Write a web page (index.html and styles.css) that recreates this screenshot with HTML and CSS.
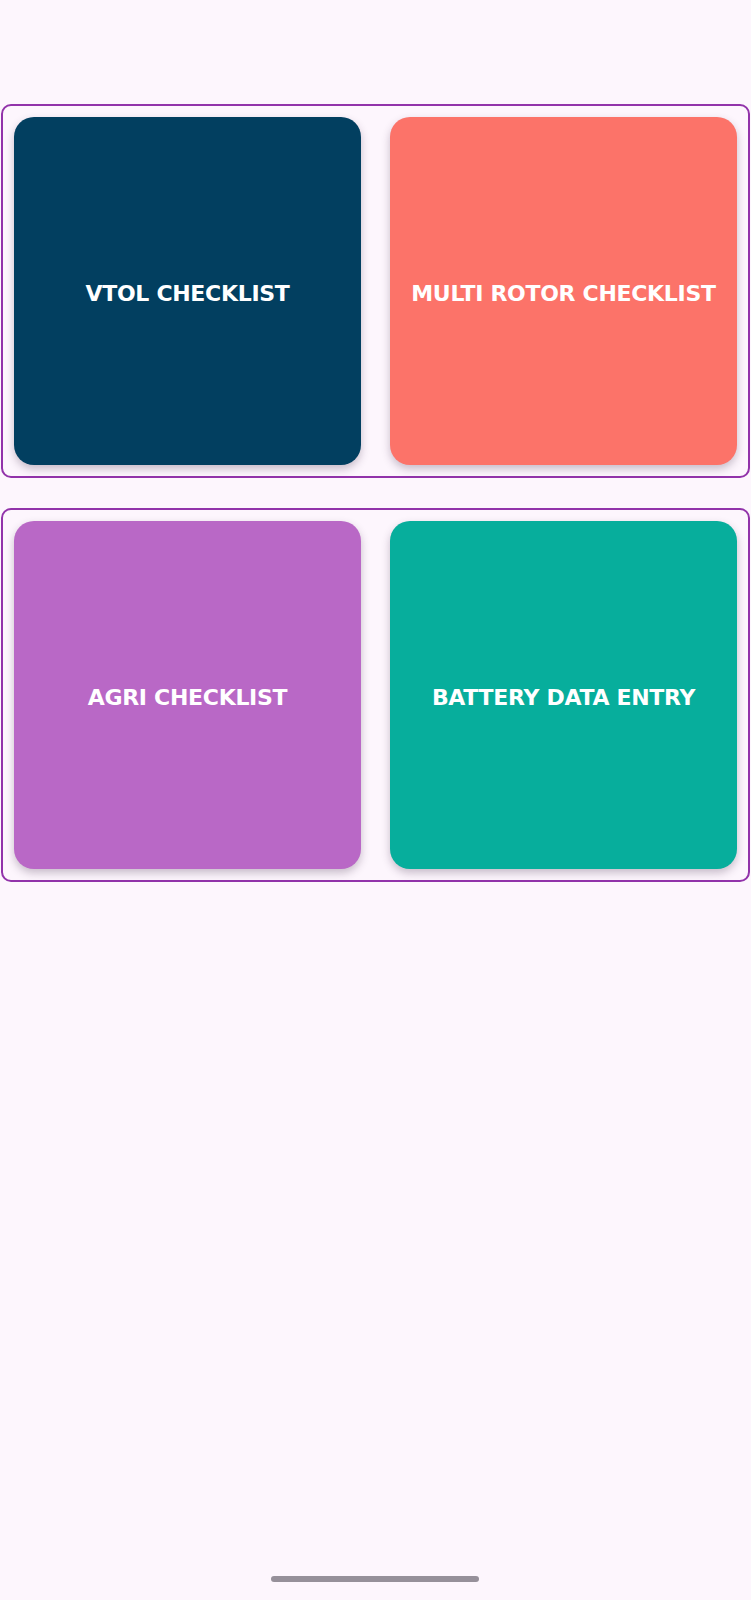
FILE: index.html
```html
<!DOCTYPE html>
<html>
<head>
<meta charset="utf-8">
<link rel="stylesheet" href="styles.css">
</head>
<body>
<main class="page">
  <section class="group">
    <div class="tile tile-navy">VTOL CHECKLIST</div>
    <div class="tile tile-coral">MULTI ROTOR CHECKLIST</div>
  </section>
  <section class="group">
    <div class="tile tile-purple">AGRI CHECKLIST</div>
    <div class="tile tile-teal">BATTERY DATA ENTRY</div>
  </section>
</main>
<div class="home-indicator"></div>
</body>
</html>
```
FILE: styles.css
```css
html, body {
  margin: 0;
  padding: 0;
  background: #fdf6fd;
}
body {
  width: 751px;
  height: 1600px;
  font-family: "DejaVu Sans", "Liberation Sans", sans-serif;
}
.page {
  padding-top: 104px;
  display: flex;
  flex-direction: column;
  gap: 30px;
}
.group {
  margin: 0 1px;
  border: 2px solid #9233aa;
  border-radius: 10px;
  padding: 11px;
  display: grid;
  grid-template-columns: 347px 347px;
  column-gap: 29px;
}
.tile {
  box-sizing: border-box;
  height: 348px;
  padding-top: 4px;
  border-radius: 20px;
  display: flex;
  align-items: center;
  justify-content: center;
  color: #ffffff;
  font-weight: bold;
  font-size: 22px;
  letter-spacing: -0.3px;
  box-shadow: 0 4px 9px rgba(60, 40, 70, 0.28);
  white-space: nowrap;
}
.tile-navy { background: #023f60; }
.tile-coral { background: #fc7369; }
.tile-purple { background: #b968c6; }
.tile-teal { background: #07ae9c; }
.home-indicator {
  position: fixed;
  left: 271px;
  top: 1576px;
  width: 208px;
  height: 6px;
  border-radius: 3px;
  background: #96909a;
}
```
